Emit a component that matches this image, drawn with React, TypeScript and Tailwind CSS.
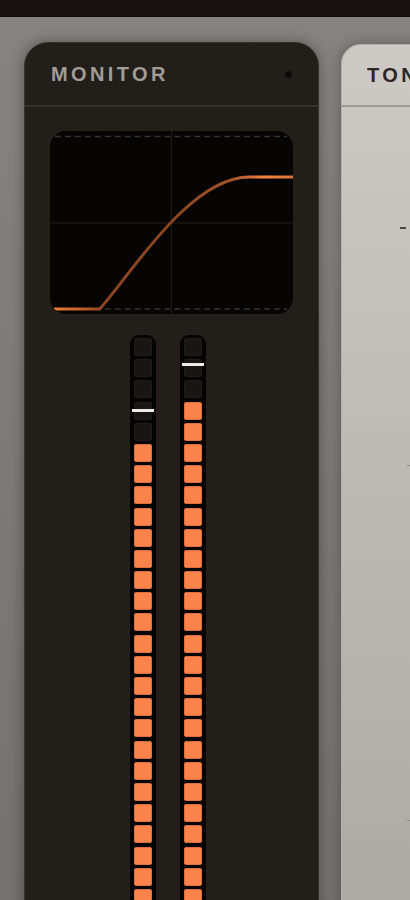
import React from 'react';

const SEGMENTS = 32;

function Meter({ lit, peak }: { lit: number; peak: number }) {
  return (
    <div className="relative w-[26px] bg-[#050403] rounded-t-[9px] px-[4px] pt-[3px] flex flex-col gap-[3.2px]">
      {Array.from({ length: SEGMENTS }).map((_, i) => (
        <div
          key={i}
          className={
            i >= lit
              ? 'h-[18px] shrink-0 rounded-[2px] bg-[#f9834a] border border-[#e0703c]'
              : 'h-[18px] shrink-0 rounded-[2px] bg-[#181513] border border-[#1f1b18]'
          }
        />
      ))}
      <div className="absolute left-[2px] w-[22px] h-[3px] bg-[#ecebe8]" style={{ top: peak }} />
    </div>
  );
}

function Scope() {
  return (
    <div className="h-[183px] w-full rounded-[16px] bg-[#070504] overflow-hidden">
      <svg viewBox="0 0 244 183" width="100%" height="100%" preserveAspectRatio="none">
        <defs>
          <linearGradient id="curve" x1="0" y1="0" x2="244" y2="0" gradientUnits="userSpaceOnUse">
            <stop offset="0" stopColor="#f7813f" />
            <stop offset="0.12" stopColor="#c8622c" />
            <stop offset="0.22" stopColor="#8c4421" />
            <stop offset="0.5" stopColor="#8a4521" />
            <stop offset="0.75" stopColor="#a3522a" />
            <stop offset="0.88" stopColor="#f6843f" />
            <stop offset="1" stopColor="#d9743a" />
          </linearGradient>
        </defs>
        <line x1="122" y1="0" x2="122" y2="183" stroke="#1f1b18" strokeWidth="1" />
        <line x1="0" y1="92" x2="244" y2="92" stroke="#1f1b18" strokeWidth="1" />
        <line x1="5" y1="5.5" x2="238" y2="5.5" stroke="#36322f" strokeWidth="1.3" strokeDasharray="6 4" />
        <line x1="5" y1="178" x2="238" y2="178" stroke="#36322f" strokeWidth="1.3" strokeDasharray="6 4" />
        <path
          d="M 4 178 L 50 178 C 80 145, 140 46, 200 46 L 244 46"
          fill="none"
          stroke="url(#curve)"
          strokeWidth="3"
          strokeLinejoin="round"
        />
      </svg>
    </div>
  );
}

export default function App() {
  return (
    <div
      className="h-[900px] w-full overflow-hidden flex flex-col bg-gradient-to-b from-[#878380] to-[#75716e]"
      style={{ fontFamily: '"Liberation Sans", Arial, sans-serif' }}
    >
      <div className="h-[17px] shrink-0 bg-[#17120f] border-b border-[#0a0807]" />

      <div className="flex items-start gap-[22px] pl-[24px] pt-[25px]">
        {/* monitor panel */}
        <div className="w-[295px] shrink-0 h-[900px] rounded-t-[24px] bg-[#221e1a] border border-[#37322e] shadow-[0_0_14px_rgba(0,0,0,0.35)]">
          <div className="h-[64px] flex items-center justify-between pl-[26px] pr-[26px] border-b-2 border-[#36312d]">
            <span className="text-[20px] font-bold tracking-[0.17em] text-[#a29c97]">MONITOR</span>
            <span className="w-[7px] h-[7px] rounded-full bg-[#0d0b0a]" />
          </div>
          <div className="px-[25px] pt-[24px]">
            <Scope />
            <div className="mt-[21px] flex justify-center gap-[24px] pr-[7px]">
              <Meter lit={5} peak={74} />
              <Meter lit={3} peak={28} />
            </div>
          </div>
        </div>

        {/* tone panel */}
        <div className="relative w-[295px] shrink-0 h-[900px] mt-[2px] rounded-t-[20px] bg-gradient-to-b from-[#cdc9c5] to-[#aca8a4] border border-[#b3afab] shadow-[0_0_14px_rgba(0,0,0,0.3)]">
          <div className="h-[62px] flex items-center pl-[25px] border-b-2 border-[#9e9a96]">
            <span className="text-[20px] font-bold tracking-[0.17em] text-[#2a2624]">TONE</span>
          </div>
          <div className="absolute left-[58px] top-[182px] w-[6px] h-[2px] bg-[#4a4644]" />
          <div className="absolute left-[65px] top-[420px] w-[8px] h-[1px] bg-[#8e8a86]" />
          <div className="absolute left-[65px] top-[775px] w-[8px] h-[1px] bg-[#8e8a86]" />
        </div>
      </div>
    </div>
  );
}
